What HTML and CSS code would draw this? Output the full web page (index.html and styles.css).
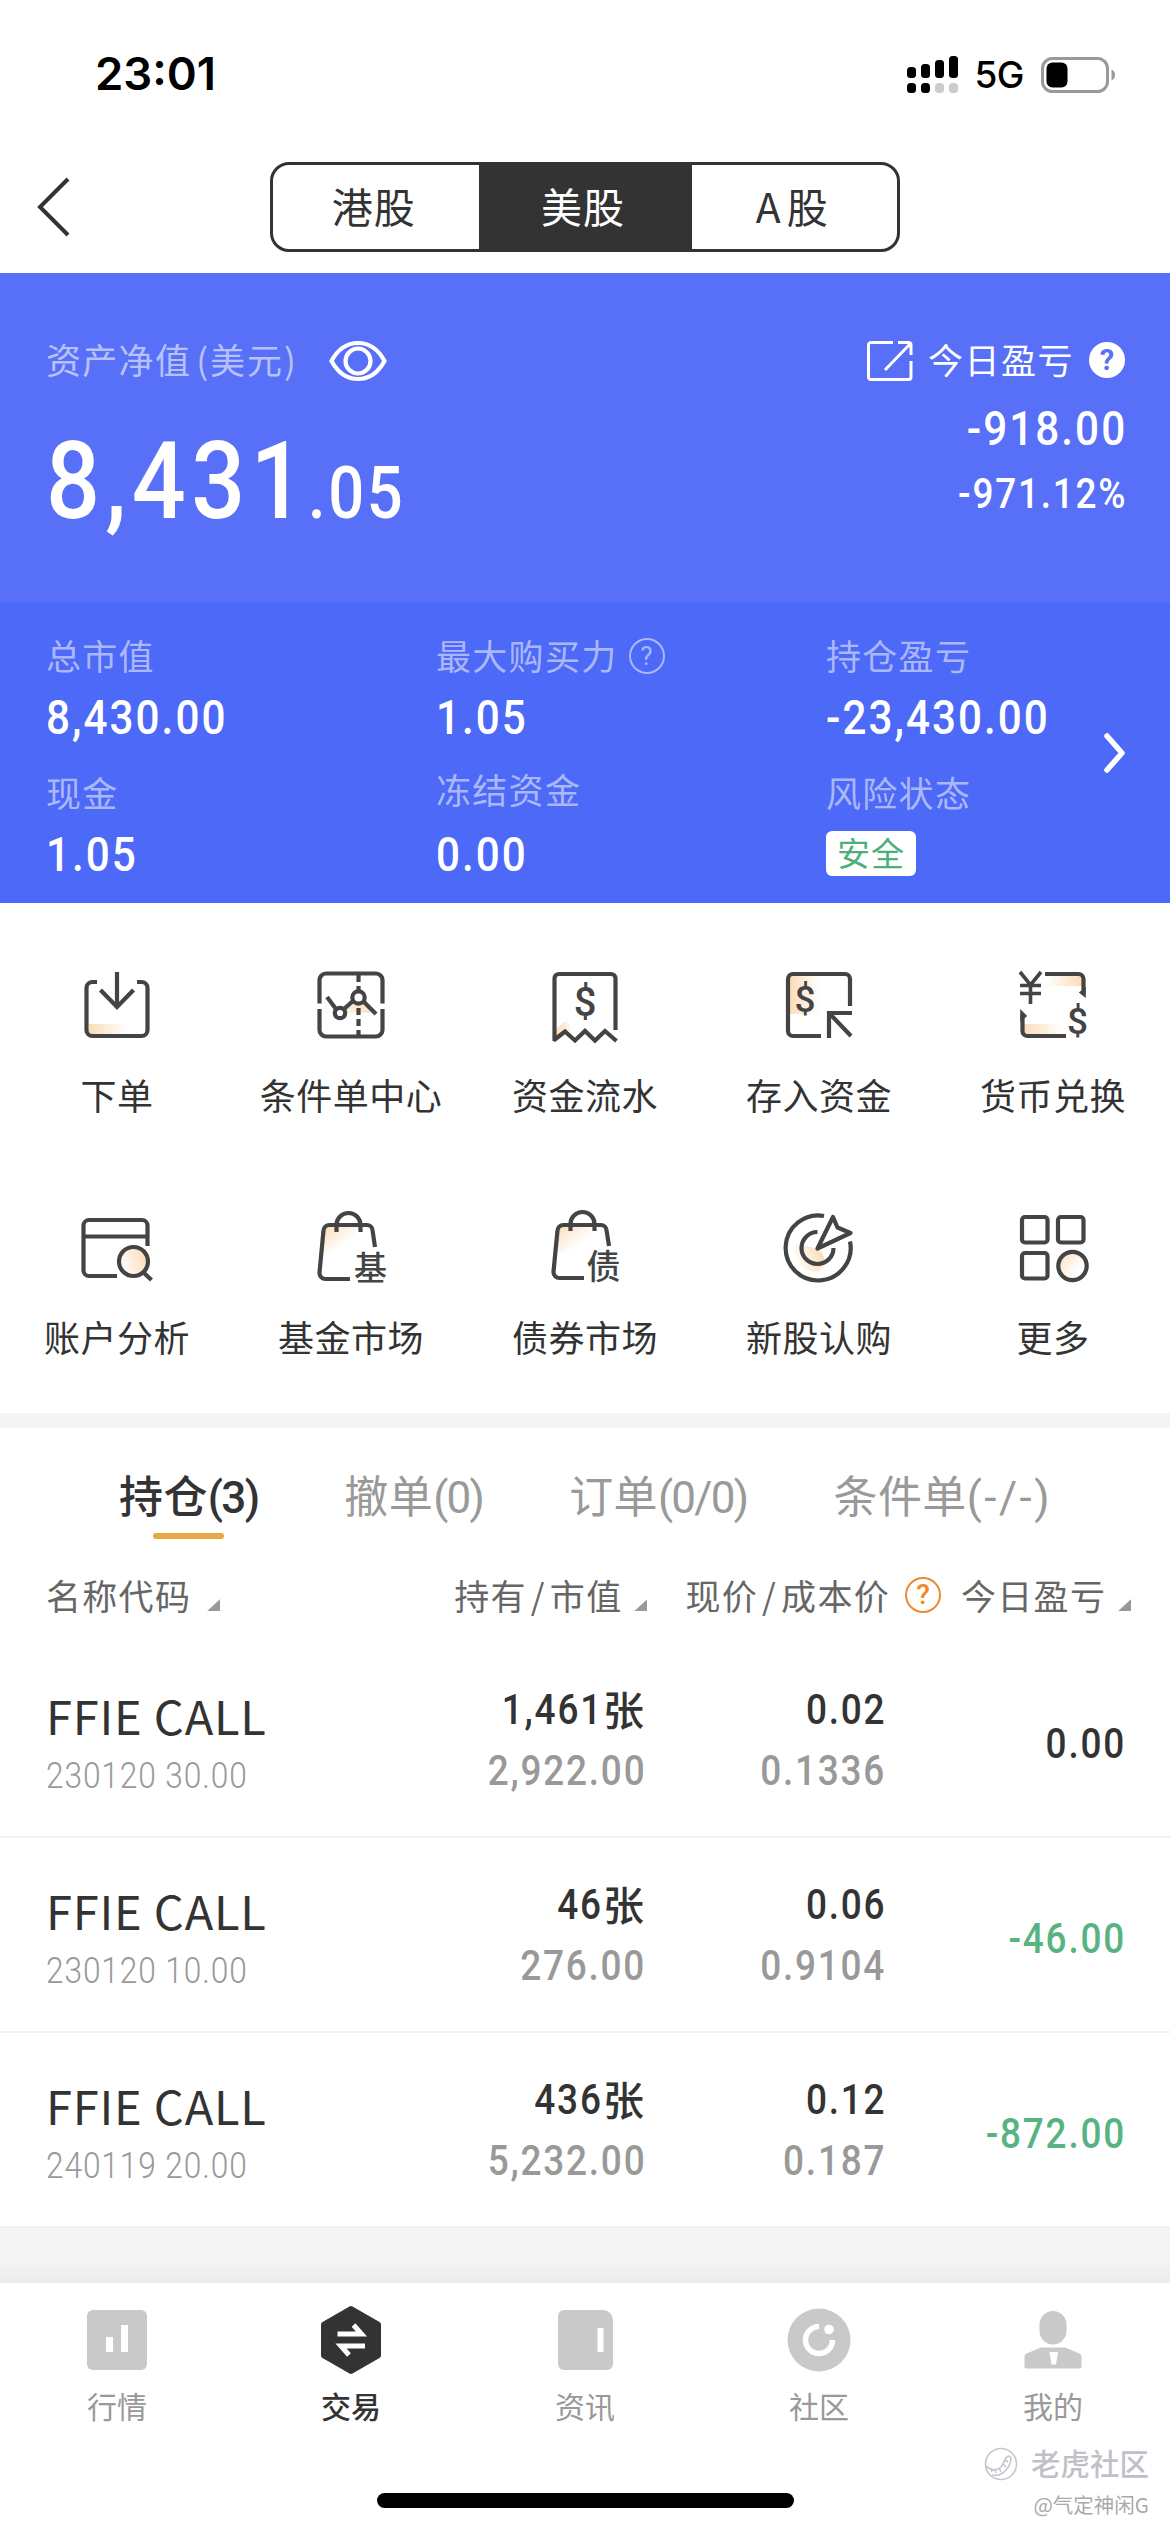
FILE: index.html
```html
<!DOCTYPE html>
<html lang="zh-CN">
<head>
<meta charset="utf-8">
<title>交易</title>
<link rel="stylesheet" href="styles.css">
</head>
<body>
<svg class="defs" width="0" height="0" aria-hidden="true">
  <defs>
    <linearGradient id="warm" x1="0" y1="0" x2="1" y2="0"><stop offset="0" stop-color="#fbdcb8"/><stop offset="1" stop-color="#fbdcb8" stop-opacity="0"/></linearGradient>
    <linearGradient id="warmBack" x1="1" y1="0" x2="0" y2="0"><stop offset="0" stop-color="#fbdcb8"/><stop offset="1" stop-color="#fbdcb8" stop-opacity="0"/></linearGradient>
    <linearGradient id="warmDiag" x1="0" y1="0" x2="0.7" y2="0.6"><stop offset="0" stop-color="#fbdcb8"/><stop offset="1" stop-color="#fbdcb8" stop-opacity="0"/></linearGradient>
    <linearGradient id="warmDiagBack" x1="1" y1="0.4" x2="0.1" y2="0.7"><stop offset="0" stop-color="#fbdcb8"/><stop offset="1" stop-color="#fbdcb8" stop-opacity="0.1"/></linearGradient>
  </defs>
</svg>
<div class="screen">
  <header class="status">
    <span class="clock">23:01</span>
    <div class="status-right">
      <svg class="signal" width="54" height="38" viewBox="0 0 54 38">
        <rect x="0" y="11" width="9" height="11" rx="3.5"/><rect x="14" y="8" width="9" height="14" rx="3.5"/><rect x="28" y="4" width="9" height="18" rx="3.5"/><rect x="42" y="0" width="9" height="22" rx="3.5"/>
        <rect x="0" y="27" width="9" height="10" rx="3.5"/><rect x="14" y="27" width="9" height="10" rx="3.5"/><rect x="28" y="27" width="9" height="10" rx="3.5" fill="#ccc"/><rect x="42" y="27" width="9" height="10" rx="3.5" fill="#ccc"/>
      </svg>
      <span class="network">5G</span>
      <svg class="battery" width="76" height="36" viewBox="0 0 76 36">
        <rect x="1.5" y="1.5" width="65" height="33" rx="10" fill="none" stroke="#999" stroke-width="3"/>
        <rect x="5.5" y="5.5" width="21" height="25" rx="6"/>
        <path d="M70.500 12.500a6 6 0 0 1 0 11z" fill="#999"/>
      </svg>
    </div>
  </header>

  <nav class="nav">
    <svg class="back" width="34" height="60" viewBox="0 0 34 60"><path d="M32 2L4 30l28 28" fill="none" stroke="#333" stroke-width="4"/></svg>
    <div class="segments">
      <span class="segment">港股</span><span class="segment active">美股</span><span class="segment"><i class="latin">A</i>股</span>
    </div>
  </nav>

  <section class="assets">
    <div class="net">
      <div class="net-label"><span>资产净值<i class="paren">(美元)</i></span>
        <svg class="eye" width="60" height="44" viewBox="0 0 60 44" fill="none" stroke="#fff" stroke-width="4.200"><path d="M3.500 22C10 10 19 4 30 4s20 6 26.500 18C50 34 41 40 30 40S10 34 3.500 22z"/><circle cx="30" cy="22" r="12.500"/></svg>
      </div>
      <div class="net-value figure"><span class="whole">8,431</span><span class="cents">.05</span></div>
    </div>
    <div class="today">
      <div class="today-label">
        <svg class="share" width="46" height="40" viewBox="0 0 46 40" fill="none" stroke="#fff" stroke-width="3"><path d="M26 1.500H4a2.500 2.500 0 0 0-2.500 2.500v32a2.500 2.500 0 0 0 2.500 2.500h37.500a2.500 2.500 0 0 0 2.500-2.500V20M31 1.500h10.500A2.500 2.500 0 0 1 44 4v10M43 3L18 29"/></svg>
        <span>今日盈亏</span>
        <b class="help solid">?</b>
      </div>
      <div class="today-value figure end">-918.00</div>
      <div class="today-rate figure end">-971.12%</div>
    </div>
  </section>

  <section class="details">
    <div class="cell"><span class="label">总市值</span><span class="value figure">8,430.00</span></div>
    <div class="cell"><span class="label">最大购买力<b class="help line">?</b></span><span class="value figure">1.05</span></div>
    <div class="cell"><span class="label">持仓盈亏</span><span class="value figure">-23,430.00</span></div>
    <div class="cell"><span class="label">现金</span><span class="value figure">1.05</span></div>
    <div class="cell raised"><span class="label">冻结资金</span><span class="value figure">0.00</span></div>
    <div class="cell"><span class="label">风险状态</span><span class="safe">安全</span></div>
    <svg class="more" width="24" height="42" viewBox="0 0 24 42"><path d="M4 4l15 17L4 38" fill="none" stroke="#fff" stroke-width="5.500" stroke-linecap="round" stroke-linejoin="round"/></svg>
  </section>

  <section class="shortcuts">
    <a class="shortcut"><svg class="glyph" viewBox="0 0 80 80"><rect class="fill" x="12" y="59" width="38" height="11" fill="url(#warm)"/><path d="M20 17h-4.500a6 6 0 0 0-6 6v42a6 6 0 0 0 6 6h49a6 6 0 0 0 6-6V23a6 6 0 0 0-6-6H60M40 7v34M23.500 25L40 42l16.500-17"/></svg><span>下单</span></a>
    <a class="shortcut"><svg class="glyph" viewBox="0 0 80 80"><path class="fill" d="M14 32l15 16 18-15 15 15H14z" fill="url(#warmDiagBack)"/><path d="M8.500 38.500V15a6.500 6.500 0 0 1 6.500-6.500h50a6.500 6.500 0 0 1 6.500 6.500v23.500M8.500 44v21a6.500 6.500 0 0 0 6.500 6.500h50a6.500 6.500 0 0 0 6.500-6.500V44"/><path d="M47.500 10v62" stroke-dasharray="7 4"/><path d="M16 32l9 12M33 44l10-9M52 36l13 13"/><circle cx="29" cy="48" r="5.200" fill="#fff"/><circle cx="47.500" cy="32.500" r="6.200" fill="#fff"/></svg><span>条件单中心</span></a>
    <a class="shortcut"><svg class="glyph" viewBox="0 0 80 80"><path class="fill" d="M11 72V64l9-8 9 8-9 3z" fill="url(#warm)"/><path d="M9.500 76V13.500a4.500 4.500 0 0 1 4.500-4.500h52a4.500 4.500 0 0 1 4.500 4.500V65M8.500 75.500L20 66.500l10 9 10-9.500 10 9.500 10-9.500 11.500 10"/><text x="40" y="51" font-size="40">$</text></svg><span>资金流水</span></a>
    <a class="shortcut"><svg class="glyph" viewBox="0 0 80 80"><rect class="fill" x="11" y="11" width="30" height="38" fill="url(#warm)"/><path d="M71 41V14a5 5 0 0 0-5-5H14a5 5 0 0 0-5 5v52a5 5 0 0 0 5 5h28M50 73V48h23M51 49l21 22"/><text x="26" y="47" font-size="37">$</text></svg><span>存入资金</span></a>
    <a class="shortcut"><svg class="glyph" viewBox="0 0 80 80"><rect class="fill" x="34" y="11" width="35" height="10" fill="url(#warmBack)"/><rect class="fill" x="11" y="59" width="38" height="11" fill="url(#warm)"/><path d="M32 9h33.500a5 5 0 0 1 5 5v14M9.500 50v16a5 5 0 0 0 5 5H53"/><path class="fill" d="M72.800 33V22l-7 5.500zM7.200 44v13l7-6z" fill="#444"/><path d="M7 7l10.500 13L28 7M17.500 19v20M7 20.500h21M7 28.500h21" stroke-width="3.600"/><text x="64.500" y="69" font-size="37">$</text></svg><span>货币兑换</span></a>
    <a class="shortcut"><svg class="glyph" viewBox="0 0 80 80"><circle class="fill" cx="56.500" cy="54.500" r="14" fill="url(#warmDiagBack)"/><path d="M40 69H12a5.500 5.500 0 0 1-5.500-5.500v-45A5.500 5.500 0 0 1 12 13h53a5.500 5.500 0 0 1 5.500 5.500V39M6.500 29.500h64M67 66l7.500 7"/><circle cx="56.500" cy="54.500" r="14.500"/></svg><span>账户分析</span></a>
    <a class="shortcut"><svg class="glyph" viewBox="0 0 80 80"><path class="fill" d="M14 20h34L34 46H10z" fill="url(#warmDiag)"/><path d="M39 72H14.500a6 6 0 0 1-6-6.500l4-42a6 6 0 0 1 6-5.500H56a5.500 5.500 0 0 1 5.500 5l2.500 17M25.500 25v-7a12 12 0 0 1 24 0v7"/><text class="han" x="59.500" y="72.500" font-size="33">基</text></svg><span>基金市场</span></a>
    <a class="shortcut"><svg class="glyph" viewBox="0 0 80 80"><path class="fill" d="M14 20h34L34 46H10z" fill="url(#warmDiag)"/><path d="M39 71H14.500a6 6 0 0 1-6-6.500l4-41a6 6 0 0 1 6-5.500H56a5.500 5.500 0 0 1 5.500 5l2.500 16M25.500 24v-7a12 12 0 0 1 24 0v7"/><text class="han" x="58.500" y="72" font-size="34">债</text></svg><span>债券市场</span></a>
    <a class="shortcut"><svg class="glyph" viewBox="0 0 80 80"><path class="fill" d="M38 42L18 36c-4 5-3 12 0 18 4 8 12 12 22 10 6-8 8-16-2-22z" fill="url(#warmDiagBack)"/><path d="M45 9A32.500 32.500 0 1 0 71 34.500M38.500 25A16 16 0 1 0 54.500 41"/><path d="M38.500 41.500L54 10l4.500 10.500 13 5.500z" stroke-linejoin="round"/></svg><span>新股认购</span></a>
    <a class="shortcut"><svg class="glyph" viewBox="0 0 80 80"><circle class="fill" cx="59.500" cy="59" r="14" fill="url(#warmDiag)"/><rect x="9" y="10" width="25.500" height="25.500" rx="3"/><rect x="45" y="10" width="25.500" height="25.500" rx="3"/><rect x="9" y="46" width="25.500" height="25.500" rx="3"/><circle cx="59.500" cy="59" r="14.200"/></svg><span>更多</span></a>
  </section>

  <div class="band"></div>

  <div class="tabs">
    <span class="tab active">持仓<i class="num">(3)</i></span>
    <span class="tab">撤单<i class="num">(0)</i></span>
    <span class="tab">订单<i class="num">(0/0)</i></span>
    <span class="tab">条件单<i class="num dash">(-/-)</i></span>
  </div>

  <div class="columns">
    <span class="col-name">名称代码<i class="tri"></i></span>
    <span class="col-hold">持有<em>/</em>市值<i class="tri"></i></span>
    <span class="col-price">现价<em>/</em>成本价<b class="help orange">?</b></span>
    <span class="col-day">今日盈亏<i class="tri"></i></span>
  </div>

  <div class="rows">
    <div class="row">
      <div class="name"><span class="title">FFIE CALL</span><span class="code figure">230120 30.00</span></div>
      <div class="pair"><div class="line-item"><span class="figure end">1,461</span><i class="unit">张</i></div><div class="line-item sub"><span class="figure end">2,922.00</span></div></div>
      <div class="pair"><div class="line-item"><span class="figure end">0.02</span></div><div class="line-item sub"><span class="figure end">0.1336</span></div></div>
      <div class="day figure end">0.00</div>
    </div>
    <div class="row">
      <div class="name"><span class="title">FFIE CALL</span><span class="code figure">230120 10.00</span></div>
      <div class="pair"><div class="line-item"><span class="figure end">46</span><i class="unit">张</i></div><div class="line-item sub"><span class="figure end">276.00</span></div></div>
      <div class="pair"><div class="line-item"><span class="figure end">0.06</span></div><div class="line-item sub"><span class="figure end">0.9104</span></div></div>
      <div class="day down figure end">-46.00</div>
    </div>
    <div class="row">
      <div class="name"><span class="title">FFIE CALL</span><span class="code figure">240119 20.00</span></div>
      <div class="pair"><div class="line-item"><span class="figure end">436</span><i class="unit">张</i></div><div class="line-item sub"><span class="figure end">5,232.00</span></div></div>
      <div class="pair"><div class="line-item"><span class="figure end">0.12</span></div><div class="line-item sub"><span class="figure end">0.187</span></div></div>
      <div class="day down figure end">-872.00</div>
    </div>
  </div>

  <div class="filler"></div>

  <footer class="tabbar">
    <a class="item"><svg width="72" height="72" viewBox="0 0 72 72"><rect x="6" y="6" width="60" height="60" rx="6"/><path d="M25 33h7v15h-7zM40 21h7v27h-7z" fill="#fff"/></svg><span>行情</span></a>
    <a class="item current"><svg width="72" height="72" viewBox="0 0 72 72"><path d="M36 5l27 15.500v31L36 67 9 51.500v-31z" stroke="#333" stroke-width="6" stroke-linejoin="round"/><path d="M22.500 30h24l-8-9M50 42H26l8 9" fill="none" stroke="#fff" stroke-width="5"/></svg><span>交易</span></a>
    <a class="item"><svg width="72" height="72" viewBox="0 0 72 72"><path d="M15 6h39a10 10 0 0 1 10 10v44a6 6 0 0 1-6 6H15a6 6 0 0 1-6-6V12a6 6 0 0 1 6-6z"/><path d="M48.500 24h6v24h-6z" fill="#fff"/></svg><span>资讯</span></a>
    <a class="item"><svg width="72" height="72" viewBox="0 0 72 72"><circle cx="36" cy="36" r="31.500"/><path d="M36 22.500A13.500 13.500 0 1 0 49.500 36" fill="none" stroke="#fff" stroke-width="5.500"/><circle cx="46" cy="25.500" r="4.800" fill="#fff"/></svg><span>社区</span></a>
    <a class="item"><svg width="72" height="72" viewBox="0 0 72 72"><rect x="22.500" y="7" width="27" height="33.500" rx="13.500"/><path d="M24 43.500h24l14.500 6q2 1 2 3v10q0 2-2 2h-53q-2 0-2-2v-10q0-2 2-3z"/><path d="M32.500 48h8.500l-2 12.500h-4.500z" fill="#fff"/></svg><span>我的</span></a>
    <div class="home"></div>
    <div class="credit">
      <div class="brand"><svg width="34" height="34" viewBox="0 0 34 34" fill="none" stroke="#c4c6cc" stroke-width="1.600"><circle cx="17" cy="17" r="15.500"/><path d="M2 19c5 5 11 5 15 1s3-10 8-11c4 1 1 10-3 14-4 5-10 6-14 5M7 21l1 4M11 22l1 4M15 21l2 4M19 17l3 3M21 13l3 2"/></svg><span>老虎社区</span></div>
      <div class="author">@气定神闲G</div>
    </div>
  </footer>
</div>
</body>
</html>
```
FILE: styles.css
```css
* { box-sizing: border-box; }
body { margin: 0; background: #fff; font-family: "Noto Sans CJK SC", sans-serif; font-weight: 400; color: #333; }
i, em { font-style: normal; }
.defs { position: absolute; }
.screen { width: 1170px; height: 2532px; display: flex; flex-direction: column; overflow: hidden; }

/* narrow numerals */
.figure { display: block; font-family: Roboto, sans-serif; letter-spacing: 0.048em; transform: scaleX(0.88); transform-origin: left center; white-space: nowrap; }
.figure.end { transform-origin: right center; }

.status { height: 140px; padding: 7px 53px 0 95px; display: flex; justify-content: space-between; align-items: center; color: #000; font-family: Inter, sans-serif; }
.clock { font-size: 45.500px; font-weight: 600; letter-spacing: 0; }
.status-right { display: flex; align-items: center; padding-top: 2px; }
.network { font-size: 37px; font-weight: 500; margin: 0 17px 0 13px; letter-spacing: -0.500px; }

.nav { height: 133px; padding-left: 36px; display: flex; align-items: flex-start; }
.back { margin-top: 37px; }
.segments { margin: 22px 0 0 200px; width: 630px; height: 90px; border: 3px solid #333; border-radius: 19px; display: flex; overflow: hidden; }
.segment { flex: 1; display: flex; align-items: center; justify-content: center; font-size: 41px; letter-spacing: 1px; padding: 0 4px 4px 0; }
.segment.active { flex: 0 0 213px; background: #333; color: #fff; }
.latin { margin-right: 5px; }

.assets { height: 330px; background: #5870f7; color: #fff; display: flex; justify-content: space-between; padding: 60px 45px 0 46px; }
.net-label { height: 56px; display: flex; align-items: center; font-size: 35px; letter-spacing: 1.300px; color: #b7c2fc; }
.net-label span, .today-label span { margin-top: -5px; }
.paren { margin-left: 5px; letter-spacing: 2px; }
.eye { margin-left: 30px; }
.net-value { font-weight: 500; line-height: 128px; margin-top: 28px; }
.whole { font-size: 108px; letter-spacing: 6px; }
.cents { font-size: 72px; letter-spacing: 3px; margin-left: -2px; }
.today { display: flex; flex-direction: column; align-items: flex-end; }
.today-label { height: 56px; display: flex; align-items: center; font-size: 35px; letter-spacing: 1.500px; gap: 15px; }
.today-value { font-size: 48px; line-height: 60px; font-weight: 500; margin: 10px -2px 0 0; }
.today-rate { font-size: 42px; line-height: 52px; font-weight: 500; margin: 9px -2px 0 0; }
.help { display: inline-flex; align-items: center; justify-content: center; width: 36px; height: 36px; border-radius: 50%; font-family: Roboto, sans-serif; font-size: 29px; line-height: 36px; letter-spacing: 0; }
.help.solid { background: #fff; color: #5870f7; font-weight: 700; margin-top: -2px; }
.help.line { border: 2px solid #a9b7fc; font-weight: 400; font-size: 26px; margin: 4px 0 0 11px; }
.help.orange { border: 2px solid #ee8a2e; color: #ee8a2e; font-weight: 500; font-size: 28px; margin-left: 15px; }

.details { height: 300px; position: relative; background: #4d69f7; color: #fff; display: grid; grid-template-columns: 390px 390px 1fr; grid-template-rows: 137px 1fr; padding: 26px 0 0 46px; }
.cell { display: flex; flex-direction: column; align-items: flex-start; }
.label { height: 50px; display: flex; align-items: center; font-size: 35px; letter-spacing: 1.300px; color: #aab8fb; }
.value { font-size: 48px; line-height: 60px; font-weight: 500; margin-top: 9px; }
.raised .label { margin-top: -3px; margin-bottom: 3px; }
.safe { width: 90px; height: 45px; margin: 15px 0 0 0; background: #fff; border-radius: 6px; color: #4daf7c; font-size: 33px; line-height: 43px; text-align: center; letter-spacing: 1px; }
.more { position: absolute; left: 1103px; top: 129px; }

.shortcuts { height: 510px; padding-top: 62px; display: grid; grid-template-columns: repeat(5, 234px); grid-template-rows: 242px 242px; }
.shortcut { display: flex; flex-direction: column; align-items: center; font-size: 36px; line-height: 50px; letter-spacing: 0.500px; color: #333; }
.shortcut span { margin-top: 24px; }
.glyph { width: 80px; height: 80px; fill: none; stroke: #444; stroke-width: 4.200px; overflow: visible; }
.glyph .fill { stroke: none; }
.glyph text { fill: #444; stroke: none; font-family: Roboto, sans-serif; font-weight: 500; text-anchor: middle; letter-spacing: 0; }
.glyph .han { font-family: "Noto Sans CJK SC", sans-serif; font-weight: 500; }

.band { height: 15px; background: #f4f4f4; }

.tabs { height: 124px; display: flex; padding-left: 119px; font-size: 44px; line-height: 60px; padding-top: 36px; color: #999; }
.tab { position: relative; white-space: nowrap; letter-spacing: 0.400px; }
.tab + .tab { margin-left: 86px; }
.num { font-family: Roboto, sans-serif; font-size: 44px; letter-spacing: -1.700px; }
.dash { letter-spacing: 2.500px; }
.tab.active { color: #333; font-weight: 500; }
.tab.active::after { content: ""; position: absolute; left: 34px; top: 69px; width: 71px; height: 6px; border-radius: 3px; background: #e5a843; }

.columns { height: 91px; padding: 18px 39px 0 46px; display: flex; align-items: flex-start; font-size: 35px; line-height: 50px; letter-spacing: 1.300px; color: #666; }
.columns span { height: 50px; white-space: nowrap; display: flex; align-items: center; }
.columns em { margin: 0 4px; }
.col-hold { margin-left: 234px; }
.col-price { margin-left: 38px; }
.col-day { margin-left: 20px; }
.tri { width: 13px; height: 12px; margin: 20px 0 0 12px; background: #999; clip-path: polygon(100% 0, 100% 100%, 0 100%); }
.col-name .tri { margin-left: 16px; }

.row { height: 195px; border-bottom: 2px solid #f1f1f1; padding: 0 46px 0 46px; display: grid; grid-template-columns: 298px 300px 240px 240px; }
.name { display: flex; flex-direction: column; }
.title { font-size: 47px; line-height: 60px; margin-top: 42px; letter-spacing: 0.800px; }
.code { font-weight: 300; font-size: 36px; line-height: 44px; letter-spacing: 1px; color: #999; margin-top: 9px; }
.pair { font-weight: 500; font-size: 42px; line-height: 60px; padding-top: 36px; }
.line-item { height: 61px; display: flex; align-items: center; justify-content: flex-end; }
.line-item > .end:last-child { margin-right: -2px; }
.unit { font-size: 41px; margin-top: -4px; }
.sub { color: #999; }
.day { font-size: 42px; line-height: 60px; font-weight: 500; height: 131px; padding-top: 71px; margin-right: -2px; text-align: right; }
.down { color: #58b382; }

.filler { height: 55px; background: linear-gradient(#f4f4f4 0, #f4f4f4 60%, #ebebeb 100%); }

.tabbar { position: relative; height: 249px; background: #fff; display: grid; grid-template-columns: repeat(5, 234px); color: #999; padding-top: 21px; }
.item { display: flex; flex-direction: column; align-items: center; font-size: 30px; line-height: 40px; }
.item svg { fill: #c9c9c9; }
.item span { margin-top: 9px; }
.item.current { color: #333; font-weight: 500; }
.item.current svg { fill: #333; }
.home { position: absolute; left: 377px; top: 210px; width: 417px; height: 15px; border-radius: 8px; background: #000; }
.credit { position: absolute; right: 21px; top: 161px; text-align: right; color: #bfc1c8; }
.brand { display: flex; align-items: center; gap: 13px; font-size: 29.500px; line-height: 42px; }
.brand span { margin-top: -3px; font-weight: 500; }
.author { font-size: 20.500px; line-height: 30px; margin-top: 6px; color: #aaa; }
```
